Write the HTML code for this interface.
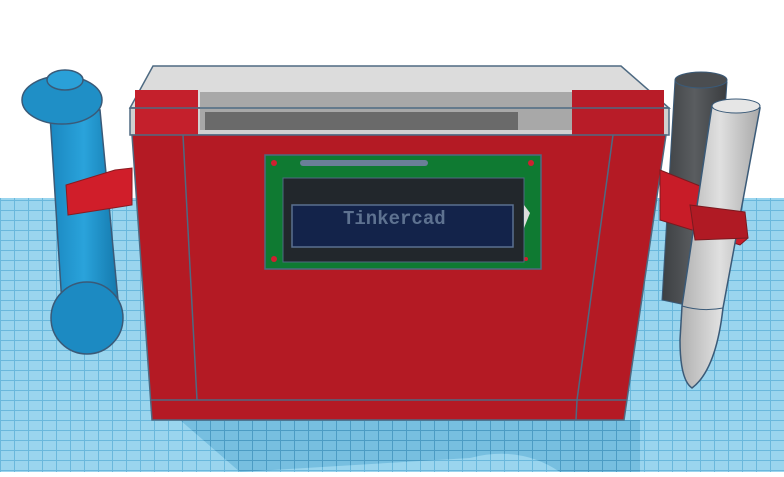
<!DOCTYPE html>
<html><head><style>body{margin:0;width:784px;height:472px;overflow:hidden;background:#fff}</style></head><body>
<svg width="784" height="472" viewBox="0 0 784 472" xmlns="http://www.w3.org/2000/svg">
<defs>
<pattern id="g" width="14" height="10" patternUnits="userSpaceOnUse">
<rect width="14" height="10" fill="#9ad5ee"/>
<path d="M0 0.5H14M0.5 0V10" stroke="#6ab8dc" stroke-width="1"/>
</pattern>
<pattern id="g2" width="14" height="10" patternUnits="userSpaceOnUse">
<rect width="14" height="10" fill="#77bfe0"/>
<path d="M0 0.5H14M0.5 0V10" stroke="#4c9cc4" stroke-width="1"/>
</pattern>
<linearGradient id="bl" x1="0" x2="1"><stop offset="0" stop-color="#1a87c0"/><stop offset=".5" stop-color="#2aa3db"/><stop offset="1" stop-color="#1479ad"/></linearGradient>
<linearGradient id="lg" x1="0" x2="1"><stop offset="0" stop-color="#b0b0b0"/><stop offset=".5" stop-color="#e0e0e0"/><stop offset="1" stop-color="#a8a8a8"/></linearGradient>
<linearGradient id="dg" x1="0" x2="1"><stop offset="0" stop-color="#3c3f42"/><stop offset=".5" stop-color="#5a5d60"/><stop offset="1" stop-color="#3a3c3f"/></linearGradient>
</defs>
<rect x="0" y="198" width="784" height="274" fill="url(#g)"/>
<path d="M180 420 L640 420 L640 472 L560 472 Q520 445 470 458 L240 472 Z" fill="url(#g2)"/>
<!-- glass top -->
<path d="M153 66 L621 66 L669 108 L130 108 Z" fill="#dcdcdc" stroke="#4e6a82" stroke-width="1.5"/>
<rect x="130" y="108" width="539" height="27" fill="#d0d0d0" stroke="#4e6a82" stroke-width="1.5"/>
<path d="M135 90 L198 90 L198 135 L135 135 Z" fill="#c4202c"/>
<path d="M200 92 L572 92 L572 130 L200 130 Z" fill="#a8a8a8"/>
<path d="M205 112 L518 112 L518 130 L205 130Z" fill="#6a6a6a"/>
<path d="M572 90 L664 90 L664 135 L572 135 Z" fill="#b81c28"/>
<path d="M130 108 L669 108" stroke="#4e6a82" stroke-width="1.5"/>
<!-- red box -->
<path d="M132 135 L666 135 L624 420 L152 420 Z" fill="#b41a24" stroke="#4e6a82" stroke-width="1.5"/>
<path d="M183 135 L197 400 M613 135 L577 400 M150 400 L627 400 M577 400 L576 420" stroke="#4e6a82" stroke-width="1.5" fill="none"/>
<!-- LCD -->
<rect x="265" y="155" width="276" height="114" fill="#0f7a32" stroke="#4e6a82" stroke-width="1.5"/>
<circle cx="274" cy="163" r="3" fill="#d02030"/><circle cx="531" cy="163" r="3" fill="#d02030"/>
<circle cx="274" cy="259" r="3" fill="#d02030"/><circle cx="526" cy="259" r="2" fill="#d02030"/>
<g fill="#6a7f98"><rect x="300" y="160" width="128" height="6" rx="3"/></g>
<rect x="283" y="178" width="241" height="84" fill="#22272c" stroke="#4e6a82"/>
<path d="M524 205 L530 213 L524 228 Z" fill="#ddd"/>
<rect x="292" y="205" width="221" height="42" fill="#13234a" stroke="#5b7090" stroke-width="1.5"/>
<text x="343" y="224" font-family="Liberation Mono, monospace" font-weight="bold" font-size="19" fill="#5e7290">Tinkercad</text>
<!-- blue handle -->
<path d="M50 115 L100 110 L118 300 L62 305 Z" fill="url(#bl)" stroke="#3a5a78" stroke-width="1.5"/>
<ellipse cx="62" cy="100" rx="40" ry="24" fill="#1f8fc6" stroke="#3a5a78" stroke-width="1.5"/>
<ellipse cx="65" cy="80" rx="18" ry="10" fill="#2aa0d8" stroke="#3a5a78" stroke-width="1.5"/>
<circle cx="87" cy="318" r="36" fill="#1c8ac2" stroke="#3a5a78" stroke-width="1.5"/>
<path d="M66 185 L115 170 L132 168 L132 205 L68 215 Z" fill="#d01e2a" stroke="#8a1a20"/>
<!-- pens -->
<path d="M675 80 L727 82 L712 300 L700 308 L662 300 Z" fill="url(#dg)" stroke="#3a5a78"/>
<ellipse cx="701" cy="80" rx="26" ry="8" fill="#4a4d50" stroke="#3a5a78"/>
<path d="M660 170 L735 200 L748 238 L740 245 L660 220 Z" fill="#c81c28" stroke="#7a1a20"/>
<path d="M712 106 L760 108 L723 308 Q716 370 692 388 Q680 380 680 340 L682 306 Z" fill="url(#lg)" stroke="#3a5a78" stroke-width="1.5"/>
<path d="M682 306 Q702 312 723 308" stroke="#3a5a78" fill="none"/>
<ellipse cx="736" cy="106" rx="24" ry="7" fill="#e6e6e6" stroke="#3a5a78"/>
<path d="M690 205 L745 212 L748 238 L695 240 Z" fill="#b01a24" stroke="#7a1a20"/>
</svg>
</body></html>
